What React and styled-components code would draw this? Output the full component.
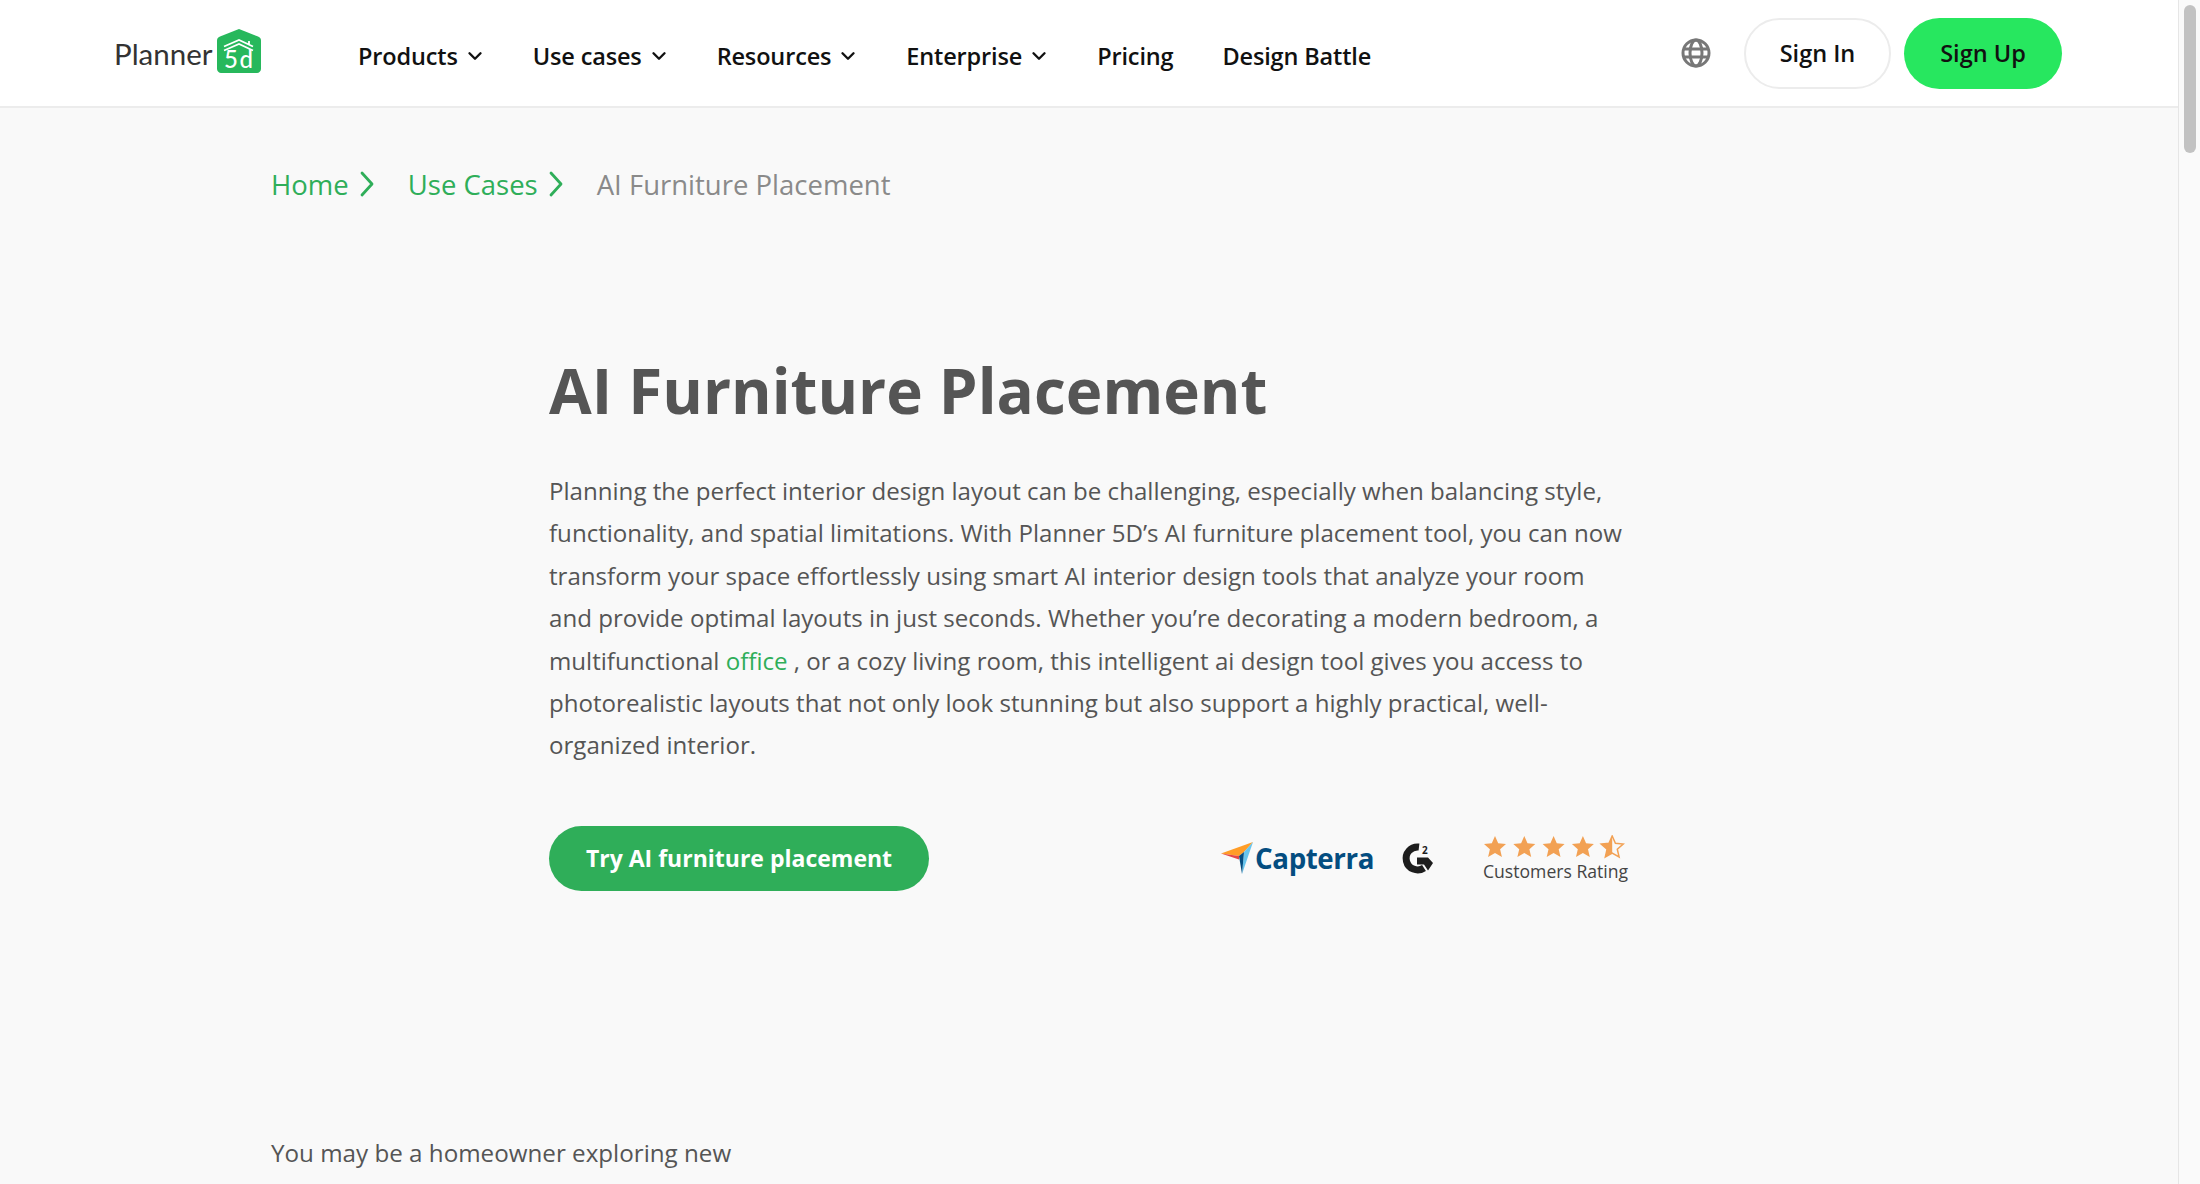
import React from "react";
import styled, { createGlobalStyle } from "styled-components";
import { ChevronDown } from "lucide-react";

const GlobalStyle = createGlobalStyle`
  html, body {
    margin: 0;
    height: 100%;
    overflow: hidden;
    background: #f9f9f9;
    font-family: "Open Sans", "Liberation Sans", sans-serif;
  }
  #root {
    height: 100%;
  }
`;

const Screen = styled.div`
  display: flex;
  height: 1184px;
  overflow: hidden;
`;

const Page = styled.div`
  flex: 1;
  display: flex;
  flex-direction: column;
  min-width: 0;
`;

const ScrollTrack = styled.div`
  width: 22px;
  box-sizing: border-box;
  flex: none;
  background: #fafafa;
  border-left: 1px solid #e6e6e6;
  padding: 5px 4px 0 5px;
`;

const ScrollThumb = styled.div`
  height: 148px;
  border-radius: 6px;
  background: #c2c2c2;
`;

const Header = styled.header`
  height: 108px;
  box-sizing: border-box;
  flex: none;
  background: #fff;
  border-bottom: 2px solid #ececec;
  display: flex;
  align-items: center;
  padding: 0 116px 0 114px;
`;

const Logo = styled.div`
  display: flex;
  align-items: center;
  gap: 4px;
  width: 244px;
  flex: none;
  margin-top: -5px;
`;

const LogoWord = styled.span`
  font-family: "Lato", sans-serif;
  font-weight: 400;
  font-size: 29.5px;
  color: #333;
  margin-top: 6px;
`;

const Nav = styled.nav`
  display: flex;
  align-items: center;
  gap: 49px;
  flex: 1;
  margin-top: 6px;
`;

const NavItem = styled.a`
  display: flex;
  align-items: center;
  gap: 6px;
  font-size: 23.5px;
  font-weight: 600;
  color: #111;
  letter-spacing: -0.15px;
  svg {
    margin-right: -2px;
  }
`;

const Actions = styled.div`
  display: flex;
  align-items: center;
`;

const GlobeIcon = styled.svg`
  width: 30px;
  height: 30px;
  margin-right: 33px;
`;

const HeaderButton = styled.a`
  display: flex;
  align-items: center;
  justify-content: center;
  height: 71px;
  box-sizing: border-box;
  border-radius: 36px;
  font-size: 23.5px;
  font-weight: 600;
  color: #111;
  width: ${(p) => (p.$primary ? "158px" : "147px")};
  margin-left: ${(p) => (p.$primary ? "13px" : "0")};
  background: ${(p) => (p.$primary ? "#27e75f" : "#fff")};
  border: ${(p) => (p.$primary ? "none" : "2px solid #ececec")};
`;

const Main = styled.main`
  flex: 1;
  display: flex;
  flex-direction: column;
  padding: 0 0 0 271px;
`;

const Crumbs = styled.div`
  display: flex;
  align-items: center;
  height: 40px;
  margin-top: 56px;
  font-size: 27.5px;
`;

const Crumb = styled.a`
  display: flex;
  align-items: center;
  gap: 11px;
  margin-right: 34px;
  color: #2fae59;
`;

const CrumbArrow = styled.svg`
  width: 14px;
  height: 26px;
  flex: none;
`;

const CrumbCurrent = styled.span`
  color: #8a8a8a;
`;

const Article = styled.article`
  margin-left: 278px;
  width: 1080px;
  margin-top: 144px;
`;

const Title = styled.h1`
  margin: 0;
  font-size: 61.9px;
  line-height: 84px;
  font-weight: 700;
  color: #555;
`;

const Body = styled.p`
  margin: 38px 0 0;
  font-size: 24.1px;
  line-height: 42.4px;
  color: #555;
  white-space: nowrap;
`;

const InlineLink = styled.a`
  color: #2fae59;
`;

const CtaRow = styled.div`
  display: flex;
  align-items: center;
  margin-top: 59px;
`;

const Cta = styled.a`
  display: flex;
  align-items: center;
  justify-content: center;
  width: 380px;
  height: 65px;
  border-radius: 33px;
  background: #2fae59;
  color: #fff;
  font-size: 23px;
  font-weight: 700;
  flex: none;
`;

const Ratings = styled.div`
  margin-left: auto;
  display: flex;
  align-items: center;
`;

const CapterraBox = styled.div`
  display: flex;
  align-items: center;
  gap: 2px;
  margin-right: 29px;
`;

const CapterraWord = styled.span`
  font-size: 27.7px;
  font-weight: 700;
  color: #044d80;
  letter-spacing: -0.4px;
`;

const G2Icon = styled.svg`
  width: 30px;
  height: 30px;
  margin-right: 50px;
  overflow: visible;
`;

const StarsBox = styled.div`
  display: flex;
  flex-direction: column;
`;

const Stars = styled.svg`
  width: 146px;
  height: 24px;
`;

const RatingLabel = styled.span`
  margin-top: 1px;
  font-size: 17.6px;
  line-height: 22px;
  color: #444;
`;

const Intro = styled.p`
  margin: 0;
  margin-top: 241px;
  font-size: 24.2px;
  line-height: 42px;
  color: #555;
`;

const navItems = [
  { label: "Products", arrow: true },
  { label: "Use cases", arrow: true },
  { label: "Resources", arrow: true },
  { label: "Enterprise", arrow: true },
  { label: "Pricing" },
  { label: "Design Battle" },
];

const starPath = "M12 1l3.2 7.3 7.8.7-5.9 5.2 1.8 7.8L12 18l-6.9 4 1.8-7.8L1 9l7.8-.7z";

const Arrow = () => (
  <CrumbArrow viewBox="0 0 14 26" fill="none" stroke="#2fae59" strokeWidth="2.8" strokeLinecap="round" strokeLinejoin="round">
    <path d="M2 2l10 11L2 24" />
  </CrumbArrow>
);

const App = () => {
  return (
    <Screen>
      <GlobalStyle />
      <Page>
        <Header>
          <Logo>
            <LogoWord>Planner</LogoWord>
            <svg width="44" height="44" viewBox="0 0 44 44">
              <path d="M22 0l19 7.500c2 .8 3 2 3 4V40c0 2-2 4-4 4H4c-2 0-4-2-4-4V11.500c0-2 1-3.200 3-4z" fill="#27b85c" />
              <path d="M7 17.500L22 11l14 6.500M7 21.500L22 15l14 6.500M32 12v4" stroke="#fff" strokeWidth="1.800" fill="none" />
              <text x="7" y="39" fontFamily="Lato, sans-serif" fontWeight="500" fontSize="24" fill="#fff" textLength="29">5d</text>
            </svg>
          </Logo>
          <Nav>
            {navItems.map((item) => (
              <NavItem key={item.label}>
                {item.label}
                {item.arrow && <ChevronDown size={22} strokeWidth={2.6} />}
              </NavItem>
            ))}
          </Nav>
          <Actions>
            <GlobeIcon viewBox="0 0 30 30" fill="none" stroke="#777" strokeWidth="3">
              <circle cx="15" cy="15" r="13" />
              <ellipse cx="15" cy="15" rx="6" ry="13" />
              <path d="M2 11h26M2 19h26" />
            </GlobeIcon>
            <HeaderButton>Sign In</HeaderButton>
            <HeaderButton $primary>Sign Up</HeaderButton>
          </Actions>
        </Header>
        <Main>
          <Crumbs>
            <Crumb>
              Home <Arrow />
            </Crumb>
            <Crumb>
              Use Cases <Arrow />
            </Crumb>
            <CrumbCurrent>AI Furniture Placement</CrumbCurrent>
          </Crumbs>
          <Article>
            <Title>AI Furniture Placement</Title>
            <Body>
              Planning the perfect interior design layout can be challenging, especially when balancing style,
              <br />
              functionality, and spatial limitations. With Planner 5D’s AI furniture placement tool, you can now
              <br />
              transform your space effortlessly using smart AI interior design tools that analyze your room
              <br />
              and provide optimal layouts in just seconds. Whether you’re decorating a modern bedroom, a
              <br />
              multifunctional <InlineLink>office</InlineLink> , or a cozy living room, this intelligent ai design tool gives you access to
              <br />
              photorealistic layouts that not only look stunning but also support a highly practical, well-
              <br />
              organized interior.
            </Body>
            <CtaRow>
              <Cta>Try AI furniture placement</Cta>
              <Ratings>
                <CapterraBox>
                  <svg width="32" height="32" viewBox="0 0 32 32">
                    <path d="M0 11.500L32 0l-9 10-5 4z" fill="#ff9d28" />
                    <path d="M0 11.500l18 2.500v3.500z" fill="#e54747" />
                    <path d="M32 0L21 32l2-22z" fill="#68c5ed" />
                    <path d="M23 10l-2 22-3-18z" fill="#044d80" />
                  </svg>
                  <CapterraWord>Capterra</CapterraWord>
                </CapterraBox>
                <G2Icon viewBox="0 0 30 30">
                  <path d="M16 4A11.500 11.500 0 1 0 21 25" fill="none" stroke="#1d1d1d" strokeWidth="7" />
                  <path d="M14 14.500h11l5 5.500-5 7.500-4-6h-7z" fill="#1d1d1d" />
                  <text x="19" y="10.500" fontSize="10" fontWeight="700" fontFamily="Open Sans, sans-serif" fill="#1d1d1d">2</text>
                </G2Icon>
                <StarsBox>
                  <Stars viewBox="0 0 146 24">
                    {[0, 1, 2, 3].map((i) => (
                      <path key={i} d={starPath} transform={`translate(${i * 29.3})`} fill="#f2a154" />
                    ))}
                    <path d={starPath} transform="translate(117.200)" fill="none" stroke="#f2a154" strokeWidth="1.500" />
                    <path d="M129.200 1v17l-6.900 4 1.800-7.800-5.900-5.200 7.800-.7z" fill="#f2a154" />
                  </Stars>
                  <RatingLabel>Customers Rating</RatingLabel>
                </StarsBox>
              </Ratings>
            </CtaRow>
          </Article>
          <Intro>You may be a homeowner exploring new</Intro>
        </Main>
      </Page>
      <ScrollTrack>
        <ScrollThumb />
      </ScrollTrack>
    </Screen>
  );
};

export default App;
